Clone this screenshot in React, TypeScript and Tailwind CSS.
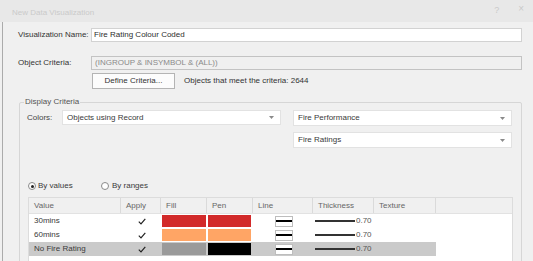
import React from "react";

const cols = [
  { key: "Value", w: "w-[92px]" },
  { key: "Apply", w: "w-[40px]" },
  { key: "Fill", w: "w-[46px]" },
  { key: "Pen", w: "w-[46px]" },
  { key: "Line", w: "w-[60px]" },
  { key: "Thickness", w: "w-[61px]" },
  { key: "Texture", w: "w-[62px]" },
];

const rows = [
  { name: "30mins", fill: "#d22a2a", pen: "#d22a2a", sel: false },
  { name: "60mins", fill: "#ffa565", pen: "#ffa565", sel: false },
  { name: "No Fire Rating", fill: "#9a9a9a", pen: "#000000", sel: true },
];

function Chevron() {
  return (
    <svg width="5" height="3" viewBox="0 0 5 3" className="shrink-0">
      <path d="M0 0 L5 0 L2.5 3 Z" fill="#8a8a8a" />
    </svg>
  );
}

function Check() {
  return (
    <svg width="8" height="7" viewBox="0 0 8 7">
      <path d="M0.8 3.6 L3 5.8 L7.3 0.8" stroke="#222" strokeWidth="1.2" fill="none" />
    </svg>
  );
}

function Select({ label, h }: { label: string; h: string }) {
  return (
    <div className={`w-[219px] ${h} bg-white border border-[#e2e2e2] flex items-center pl-[4px] pr-[6px] text-[#3a3a3a]`}>
      <span className="flex-1">{label}</span>
      <Chevron />
    </div>
  );
}

export default function App() {
  return (
    <div className="w-[533px] h-[261px] overflow-hidden bg-[#f0f0f0] text-[8px] leading-[10px] text-[#333] font-['Liberation_Sans',Arial,sans-serif]">
      {/* title bar */}
      <div className="h-[22px] bg-[#e8e8e8] flex items-center pl-[12px] pr-[9px] pt-[4px] text-[#cacaca]">
        <span className="text-[8px]">New Data Visualization</span>
        <span className="ml-auto text-[9px] self-start mt-[1px]">?</span>
        <span className="ml-[19px] text-[10px] self-start">×</span>
      </div>
      {/* body */}
      <div className="ml-[2px] border-l border-[#ababab] h-[239px] pl-[15px] pr-[11px] flex flex-col">
        <div className="mt-[6px] flex items-center h-[14px]">
          <span className="w-[73px] shrink-0">Visualization Name:</span>
          <div className="flex-1 h-[14px] bg-white border border-[#d2d2d2] flex items-center pl-[2px] text-[#2e2e2e]">
            Fire Rating Colour Coded
          </div>
        </div>
        <div className="mt-[14px] flex items-center h-[14px]">
          <span className="w-[73px] shrink-0">Object Criteria:</span>
          <div className="flex-1 h-[14px] bg-[#f0f0f0] border border-[#c3c3c3] flex items-center pl-[3px] text-[#8a8a8a]">
            (INGROUP &amp; INSYMBOL &amp; (ALL))
          </div>
        </div>
        <div className="mt-[3px] flex items-center h-[16px]">
          <div className="ml-[74px] w-[83px] h-[16px] bg-[#fcfcfc] border border-[#b4b4b4] flex items-center justify-center">
            Define Criteria...
          </div>
          <span className="ml-[9px]">Objects that meet the criteria: 2644</span>
        </div>
        <fieldset className="mt-[8px] ml-[1px] border border-[#d6d6d6] rounded-[2px] min-w-0 pb-[40px]">
          <legend className="ml-[4px] px-[1px] leading-[10px] text-[#555]">Display Criteria</legend>
          <div className="pl-[7px] pr-[9px] pt-[3px] flex flex-col">
            <div className="flex items-start">
              <div className="flex items-center h-[15px]">
                <span className="w-[35px] text-[#444]">Colors:</span>
                <Select label="Objects using Record" h="h-[15px]" />
              </div>
              <div className="ml-[12px] flex flex-col gap-[6px]">
                <Select label="Fire Performance" h="h-[16px]" />
                <Select label="Fire Ratings" h="h-[16px]" />
              </div>
            </div>
            <div className="mt-[33px] flex items-center h-[10px] text-[#3a3a3a]">
              <div className="w-[74px] flex items-center">
                <div className="ml-[1px] w-[8px] h-[8px] rounded-full border border-[#8a8a8a] bg-white flex items-center justify-center">
                  <div className="w-[3px] h-[3px] rounded-full bg-[#222]" />
                </div>
                <span className="ml-[2px]">By values</span>
              </div>
              <div className="flex items-center">
                <div className="w-[8px] h-[8px] rounded-full border border-[#8a8a8a] bg-white" />
                <span className="ml-[3px]">By ranges</span>
              </div>
            </div>
            <div className="mt-[6px] ml-[1px] w-[485px] bg-white border border-[#dcdcdc] h-[80px]">
              <div className="flex h-[16px] bg-[#f0f0f0] border-b border-[#e2e2e2] text-[#666]">
                {cols.map((c) => (
                  <div key={c.key} className={`${c.w} shrink-0 border-r border-[#dadada] flex items-center pl-[5px]`}>
                    {c.key}
                  </div>
                ))}
              </div>
              {rows.map((r) => (
                <div key={r.name} className="flex h-[14px] text-[#3a3a3a]">
                  <div className={`flex ${r.sel ? "bg-[#cacaca]" : ""}`}>
                    <div className="w-[92px] flex items-center pl-[5px]">{r.name}</div>
                    <div className="w-[40px] flex items-center justify-center pl-[1px]">
                      <Check />
                    </div>
                    <div className="w-[46px] flex items-center pl-[1px]">
                      <div className="w-[44px] h-[12px]" style={{ background: r.fill }} />
                    </div>
                    <div className="w-[46px] flex items-center pl-[1px]">
                      <div className="w-[43px] h-[12px]" style={{ background: r.pen }} />
                    </div>
                    <div className="w-[60px] flex items-center justify-center pl-[1px]">
                      <div className="w-[18px] h-[11px] bg-white border border-[#bdbdbd] flex items-center justify-center">
                        <div className="w-[16px] h-[2px] bg-black" />
                      </div>
                    </div>
                    <div className="w-[61px] flex items-center pl-[2px]">
                      <div className="w-[40px] h-[1.5px] bg-[#333]" />
                      <span className="ml-[1px] text-[#555]">0.70</span>
                    </div>
                    <div className="w-[62px]" />
                  </div>
                </div>
              ))}
            </div>
          </div>
        </fieldset>
      </div>
    </div>
  );
}
